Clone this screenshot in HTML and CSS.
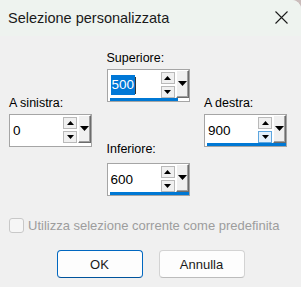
FILE: index.html
```html
<!DOCTYPE html>
<html lang="it">
<head>
    <meta charset="UTF-8">
    <meta name="viewport" content="width=device-width, initial-scale=1.0">
    <title>Selezione personalizzata</title>
    <link rel="stylesheet" href="styles.css">
</head>
<body>
    <div class="dialog">
        <div class="titlebar">
            <span class="title">Selezione personalizzata</span>
            <span class="close">
                <svg width="13" height="13" viewBox="0 0 13 13"><path d="M0.5 0.5L12.5 12.5M12.5 0.5L0.5 12.5" stroke="#1b1b1b" stroke-width="1.1" fill="none"/></svg>
            </span>
        </div>

        <div class="fields">
            <div class="col col-side">
                <label class="label">A sinistra:</label>
                <div class="spin">
                    <div class="spin-main">
                        <span class="value">0</span>
                        <div class="arrows">
                            <span class="arrow"><svg width="7" height="4" viewBox="0 0 7 4"><path d="M3.5 0L7 4H0Z"/></svg></span>
                            <span class="arrow"><svg width="7" height="4" viewBox="0 0 7 4"><path d="M0 0H7L3.5 4Z"/></svg></span>
                        </div>
                        <span class="drop"><svg width="9" height="5" viewBox="0 0 9 5"><path d="M0 0H9L4.5 5Z"/></svg></span>
                    </div>
                    <div class="line line-off"></div>
                </div>
            </div>

            <div class="col">
                <label class="label">Superiore:</label>
                <div class="spin">
                    <div class="spin-main">
                        <span class="value"><span class="selected">500</span><span class="caret"></span></span>
                        <div class="arrows">
                            <span class="arrow"><svg width="7" height="4" viewBox="0 0 7 4"><path d="M3.5 0L7 4H0Z"/></svg></span>
                            <span class="arrow"><svg width="7" height="4" viewBox="0 0 7 4"><path d="M0 0H7L3.5 4Z"/></svg></span>
                        </div>
                        <span class="drop"><svg width="9" height="5" viewBox="0 0 9 5"><path d="M0 0H9L4.5 5Z"/></svg></span>
                    </div>
                    <div class="line line-short"></div>
                </div>

                <label class="label label-low">Inferiore:</label>
                <div class="spin">
                    <div class="spin-main">
                        <span class="value">600</span>
                        <div class="arrows">
                            <span class="arrow"><svg width="7" height="4" viewBox="0 0 7 4"><path d="M3.5 0L7 4H0Z"/></svg></span>
                            <span class="arrow"><svg width="7" height="4" viewBox="0 0 7 4"><path d="M0 0H7L3.5 4Z"/></svg></span>
                        </div>
                        <span class="drop"><svg width="9" height="5" viewBox="0 0 9 5"><path d="M0 0H9L4.5 5Z"/></svg></span>
                    </div>
                    <div class="line"></div>
                </div>
            </div>

            <div class="col col-side">
                <label class="label">A destra:</label>
                <div class="spin">
                    <div class="spin-main">
                        <span class="value">900</span>
                        <div class="arrows">
                            <span class="arrow"><svg width="7" height="4" viewBox="0 0 7 4"><path d="M3.5 0L7 4H0Z"/></svg></span>
                            <span class="arrow arrow-hover"><svg width="7" height="4" viewBox="0 0 7 4"><path d="M0 0H7L3.5 4Z"/></svg></span>
                        </div>
                        <span class="drop"><svg width="9" height="5" viewBox="0 0 9 5"><path d="M0 0H9L4.5 5Z"/></svg></span>
                    </div>
                    <div class="line"></div>
                </div>
            </div>
        </div>

        <div class="option">
            <span class="check"></span>
            <span>Utilizza selezione corrente come predefinita</span>
        </div>

        <div class="actions">
            <button class="btn btn-default">OK</button>
            <button class="btn">Annulla</button>
        </div>
    </div>
</body>
</html>
```

FILE: styles.css
```css
body {
    margin: 0;
    background: #cbbdbc;
    font-family: "Liberation Sans", Arial, sans-serif;
    color: #000;
}

.dialog {
    width: 301px;
    height: 287px;
    background: #f0f0f0;
    border-top-right-radius: 9px;
    overflow: hidden;
}

.titlebar {
    height: 36px;
    background: #eef3ef;
    display: flex;
    align-items: center;
    justify-content: space-between;
    padding-left: 8px;
}

.title {
    font-size: 14.5px;
    color: #1a1a1a;
    padding-bottom: 1px;
}

.close {
    width: 40px;
    display: flex;
    justify-content: center;
    padding-bottom: 1px;
}

.fields {
    display: flex;
    justify-content: space-between;
    padding: 15px 14px 0 9px;
}

.col {
    width: 83px;
}

.col-side {
    padding-top: 45px;
}

.label {
    display: block;
    font-size: 12.5px;
    line-height: 15px;
    margin-bottom: 3px;
}

.label-low {
    margin-top: 40px;
    margin-bottom: 6px;
}

.spin {
    height: 33px;
    box-sizing: border-box;
    border: 1px solid #a5a5a5;
    background: #fff;
    display: flex;
    flex-direction: column;
}

.spin-main {
    flex: 1;
    display: flex;
}

.value {
    flex: 1;
    display: flex;
    align-items: center;
    padding: 2px 0 0 3px;
    font-size: 13.5px;
}

.selected {
    background: #0078d7;
    color: #fff;
    line-height: 20px;
    padding: 0 1px;
}

.caret {
    width: 1px;
    height: 17px;
    background: #333;
}

.arrows {
    width: 14px;
    display: flex;
    flex-direction: column;
    gap: 2px;
    padding-top: 2px;
    margin-right: 1px;
}

.arrow {
    height: 12px;
    box-sizing: border-box;
    border: 1px solid #b9b9b9;
    background: #f0f0f0;
    display: flex;
    align-items: center;
    justify-content: center;
}

.arrow-hover {
    background: #e5f1fb;
    border-color: #5ea6df;
}

.drop {
    width: 13px;
    box-sizing: border-box;
    background: #f0f0f0;
    border: 1px solid;
    border-color: #fff #6c6c6c #6c6c6c #fff;
    box-shadow: inset -1px -1px #a0a0a0;
    display: flex;
    align-items: center;
    justify-content: center;
    padding-bottom: 2px;
}

.line {
    height: 3px;
    margin-left: 2px;
    background: #0078d4;
}

.line-off {
    background: transparent;
}

.line-short {
    margin-right: 11px;
}

.option {
    display: flex;
    align-items: center;
    gap: 4px;
    padding-left: 9px;
    margin-top: 22px;
    font-size: 13px;
    color: #9d9d9d;
}

.check {
    width: 15px;
    height: 15px;
    box-sizing: border-box;
    border: 1px solid #c8c8c8;
    border-radius: 3px;
    background: #f6f6f6;
}

.actions {
    display: flex;
    justify-content: center;
    gap: 16px;
    margin-top: 17px;
}

.btn {
    width: 86px;
    height: 28px;
    box-sizing: border-box;
    border: 1px solid #d3d3d3;
    border-bottom-color: #bcbcbc;
    border-radius: 4px;
    background: #fdfdfd;
    font-family: inherit;
    font-size: 13px;
    color: #1a1a1a;
    padding: 0;
}

.btn-default {
    border-color: #0067c0;
    border-bottom-color: #00539c;
}
```
